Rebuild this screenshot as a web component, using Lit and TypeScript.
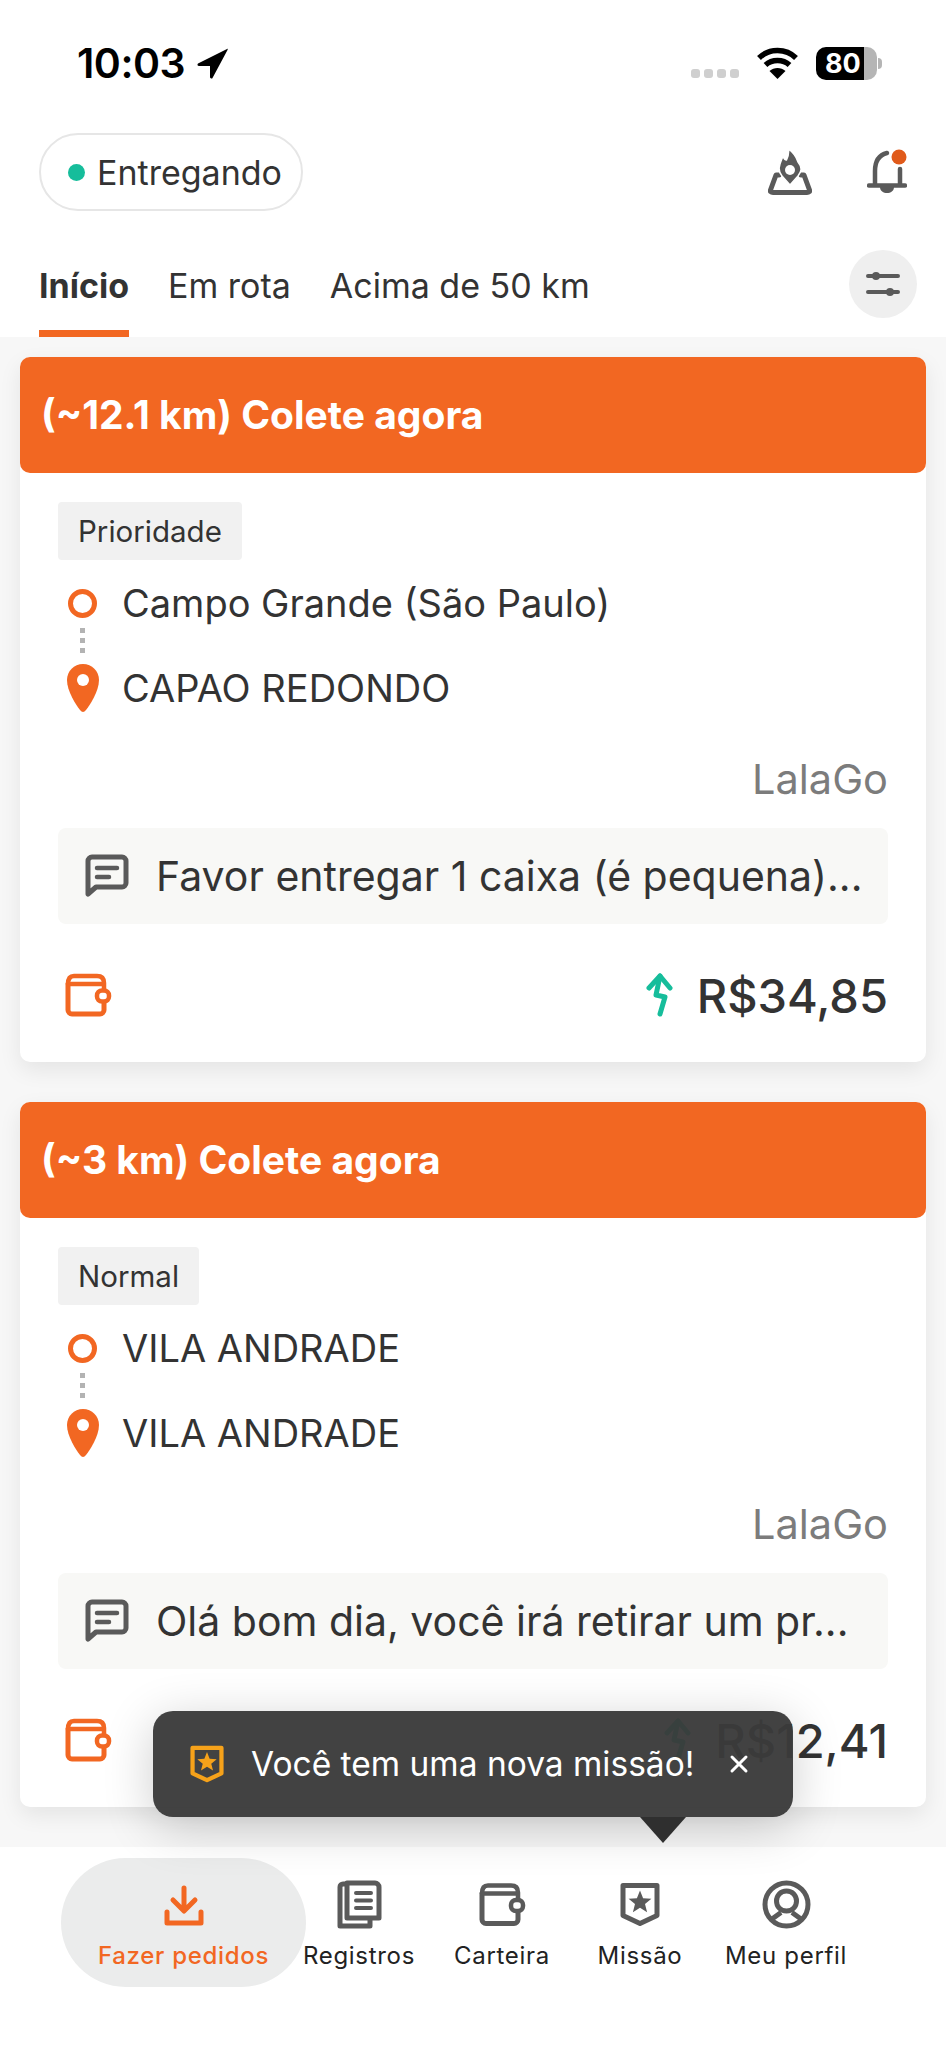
import { LitElement, html, css, svg } from "lit";
import { customElement } from "lit/decorators.js";

const GREY = "#5a5a5a";
const ORANGE = "#f26722";

// wallet is used on the cards and in the bottom bar, only the colour changes
const wallet = (color: string) => html`<svg width="47" height="44" viewBox="0 0 47 44" fill="none" stroke=${color} stroke-width="5" stroke-linejoin="round" stroke-linecap="round">
  <path d="M3 11V37a4 4 0 0 0 4 4H35a4 4 0 0 0 4-4V31" />
  <path d="M39 17V10C39 5 36 3 32 3H9C5 3 3 6 3 11H37" stroke-width="4.5" />
  <rect x="32" y="17.500" width="12" height="11" rx="5" stroke-width="4.5" />
</svg>`;

const star = (cx: number, cy: number, r: number, color: string) => {
  const pts: string[] = [];
  for (let i = 0; i < 10; i++) {
    const rad = i % 2 === 0 ? r : r * 0.44;
    const a = (Math.PI / 5) * i - Math.PI / 2;
    pts.push(`${(cx + rad * Math.cos(a)).toFixed(1)},${(cy + rad * Math.sin(a)).toFixed(1)}`);
  }
  return svg`<polygon points=${pts.join(" ")} fill=${color} stroke="none" />`;
};

const shield = (color: string, w: number, h: number) => html`<svg width=${w} height=${h} viewBox="0 0 40 44" fill="none" stroke=${color} stroke-width="5" stroke-linejoin="round">
  <path d="M3 3H37V33L20 41L3 33Z" />
  ${star(20, 20, 12, color)}
</svg>`;

const cards = [
  {
    title: "(~12.1 km) Colete agora",
    tag: "Prioridade",
    from: "Campo Grande (São Paulo)",
    to: "CAPAO REDONDO",
    note: "Favor entregar 1 caixa (é pequena)...",
    price: "R$34,85",
  },
  {
    title: "(~3 km) Colete agora",
    tag: "Normal",
    from: "VILA ANDRADE",
    to: "VILA ANDRADE",
    note: "Olá bom dia, você irá retirar um pr...",
    price: "R$12,41",
  },
];

@customElement("app-root")
export class AppRoot extends LitElement {
  static styles = css`
    :host {
      display: flex;
      flex-direction: column;
      position: relative;
      width: 946px;
      height: 2048px;
      overflow: hidden;
      background: #fff;
      font-family: Inter, "Liberation Sans", sans-serif;
      color: #333;
    }
    svg {
      display: block;
      flex: none;
    }

    .status {
      height: 126px;
      display: flex;
      align-items: center;
      padding: 0 64px 0 77px;
      color: #000;
    }
    .time {
      font-size: 41px;
      font-weight: 600;
      letter-spacing: -0.5px;
      margin-right: 12px;
    }
    .status-right {
      margin-left: auto;
      display: flex;
      align-items: center;
    }
    .signal {
      display: flex;
      gap: 4px;
      margin: 20px 18px 0 0;
    }
    .signal i {
      width: 9px;
      height: 9px;
      border-radius: 3px;
      background: #cfcfcf;
    }
    .battery {
      width: 61px;
      height: 33px;
      border-radius: 10px;
      margin-left: 18px;
      background: linear-gradient(90deg, #000 48px, #b5b5b5 48px);
      color: #fff;
      font-size: 27px;
      font-weight: 700;
      line-height: 33px;
      padding-left: 9px;
      box-sizing: border-box;
    }
    .nub {
      width: 4px;
      height: 11px;
      margin-left: 1px;
      border-radius: 0 4px 4px 0;
      background: #b5b5b5;
    }

    .top {
      height: 92px;
      display: flex;
      align-items: center;
      padding: 0 39px;
    }
    .pill {
      width: 264px;
      height: 78px;
      box-sizing: border-box;
      border: 2px solid #e6e6e6;
      border-radius: 39px;
      display: flex;
      align-items: center;
      gap: 12px;
      padding-left: 27px;
      font-size: 34px;
    }
    .pill i {
      width: 17px;
      height: 17px;
      border-radius: 50%;
      background: #16bd9b;
    }
    .top-icons {
      margin-left: auto;
      display: flex;
      align-items: center;
      gap: 55px;
    }

    .tabs {
      height: 119px;
      box-sizing: border-box;
      display: flex;
      padding: 32px 29px 0 39px;
      gap: 39px;
      font-size: 34px;
    }
    .tab {
      height: 87px;
      box-sizing: border-box;
      padding-top: 17px;
      line-height: 38px;
    }
    .tab.on {
      font-weight: 700;
      border-bottom: 7px solid #f26722;
    }
    .filter {
      width: 68px;
      height: 68px;
      margin-left: auto;
      border-radius: 50%;
      background: #efefef;
      display: flex;
      align-items: center;
      justify-content: center;
    }

    .list {
      flex: 1;
      min-height: 0;
      background: #f7f7f7;
      padding: 20px 20px 0;
      display: flex;
      flex-direction: column;
      gap: 40px;
      overflow: hidden;
    }
    .card {
      flex: none;
      background: #fff;
      border-radius: 10px;
      box-shadow: 0 8px 22px rgba(0, 0, 0, 0.08);
    }
    .card-head {
      height: 116px;
      background: #f26722;
      border-radius: 10px;
      color: #fff;
      font-size: 39px;
      font-weight: 700;
      line-height: 116px;
      padding-left: 21px;
    }
    .card-body {
      padding: 29px 38px 40px;
    }
    .tag {
      display: inline-block;
      height: 58px;
      line-height: 58px;
      padding: 0 20px;
      border-radius: 4px;
      background: #f1f1f1;
      font-size: 29.5px;
      vertical-align: top;
    }
    .route {
      display: grid;
      grid-template-columns: 49px 1fr;
      grid-template-rows: 44px 41px 44px;
      column-gap: 15px;
      margin-top: 21px;
      font-size: 38px;
      line-height: 44px;
    }
    .route > svg {
      justify-self: center;
      align-self: center;
    }
    .dots {
      justify-self: center;
      display: flex;
      flex-direction: column;
      gap: 5px;
      margin-top: 3px;
      grid-column: 1;
    }
    .dots i {
      width: 5px;
      height: 5px;
      background: #b3b3b3;
    }
    .spacer {
      grid-column: 2;
    }
    .source {
      margin-top: 46px;
      text-align: right;
      font-size: 41.5px;
      line-height: 46px;
      color: #7c7c7c;
    }
    .note {
      margin-top: 26px;
      height: 96px;
      box-sizing: border-box;
      padding: 0 20px 0 27px;
      display: flex;
      align-items: center;
      gap: 27px;
      background: #f8f8f6;
      border-radius: 8px;
      font-size: 41px;
      white-space: nowrap;
    }
    .pay {
      margin-top: 44px;
      height: 54px;
      display: flex;
      align-items: center;
      padding-left: 7px;
    }
    .price {
      margin-left: auto;
      display: flex;
      align-items: center;
      gap: 24px;
      font-size: 47px;
      font-weight: 500;
    }

    .nav {
      height: 201px;
      flex: none;
      background: #fff;
      box-sizing: border-box;
      padding: 11px 0 0 61px;
      display: grid;
      grid-template-columns: 245px 106px 180px 96px 196px;
      grid-template-rows: 129px;
      position: relative;
    }
    .nav-item {
      display: flex;
      flex-direction: column;
      align-items: center;
      padding-top: 22px;
      font-size: 24px;
      letter-spacing: 0.7px;
      line-height: 30px;
      white-space: nowrap;
      color: #222;
    }
    .nav-item svg {
      height: 49px;
      margin-bottom: 12px;
    }
    .nav-item.on {
      background: #ebecec;
      border-radius: 65px;
      color: #f26722;
      font-weight: 500;
    }

    .toast {
      position: absolute;
      left: 153px;
      top: 1711px;
      width: 640px;
      height: 106px;
      box-sizing: border-box;
      padding-left: 37px;
      display: flex;
      align-items: center;
      background: rgba(58, 58, 58, 0.96);
      border-radius: 20px;
      box-shadow: 0 10px 50px rgba(0, 0, 0, 0.2);
      color: #fff;
      font-size: 33.5px;
    }
    .toast::after {
      content: "";
      position: absolute;
      left: 487px;
      top: 106px;
      border-left: 23px solid transparent;
      border-right: 23px solid transparent;
      border-top: 26px solid #2f2f2f;
    }
    .toast-text {
      margin-left: 27px;
    }
    .toast-x {
      margin-left: 35px;
    }
  `;

  private renderCard(c: (typeof cards)[number]) {
    return html`<div class="card">
      <div class="card-head">${c.title}</div>
      <div class="card-body">
        <span class="tag">${c.tag}</span>
        <div class="route">
          <svg width="29" height="29" viewBox="0 0 29 29">
            <circle cx="14.500" cy="14.500" r="12" fill="none" stroke=${ORANGE} stroke-width="5" />
          </svg>
          <div>${c.from}</div>
          <div class="dots"><i></i><i></i><i></i></div>
          <div class="spacer"></div>
          <svg width="32" height="48" viewBox="0 0 32 48">
            <path d="M16 0C7 0 0 7 0 16C0 27 9 41 13 46C15 48.500 17 48.500 19 46C23 41 32 27 32 16C32 7 25 0 16 0Z" fill=${ORANGE} />
            <circle cx="16" cy="16" r="6" fill="#fff" />
          </svg>
          <div>${c.to}</div>
        </div>
        <div class="source">LalaGo</div>
        <div class="note">
          <svg width="44" height="44" viewBox="0 0 44 44" fill="none" stroke=${GREY} stroke-width="5" stroke-linejoin="round">
            <path d="M3 40V7a4 4 0 0 1 4-4H37a4 4 0 0 1 4 4V29a4 4 0 0 1-4 4H11Z" />
            <path d="M12 14H32M12 23H24" stroke-linecap="round" stroke-width="4.500" />
          </svg>
          <span>${c.note}</span>
        </div>
        <div class="pay">
          ${wallet(ORANGE)}
          <div class="price">
            <svg width="27" height="44" viewBox="0 0 27 44" fill="none" stroke="#16bd9b" stroke-width="5" stroke-linecap="round" stroke-linejoin="round">
              <path d="M3 15L14 3L24 15" />
              <path d="M14 3L10 22L19 24L14 41" />
            </svg>
            <span>${c.price}</span>
          </div>
        </div>
      </div>
    </div>`;
  }

  render() {
    return html`
      <div class="status">
        <span class="time">10:03</span>
        <svg width="31" height="31" viewBox="0 0 31 31"><path d="M30 1L1 15.500C0 16.500 0.500 18 2 18H13V29C13 30.500 15 31 15.500 30L30.500 2C31 1 30.500 0.500 30 1Z" fill="#000" /></svg>
        <div class="status-right">
          <div class="signal"><i></i><i></i><i></i><i></i></div>
          <svg width="41" height="32" viewBox="0 0 41 32" fill="none" stroke="#000" stroke-width="5.500">
            <path d="M2 11C12 1 29 1 39 11" />
            <path d="M8.500 18C15 12 26 12 32.500 18" />
            <path d="M20.500 32L12.500 24C17 20 24 20 28.500 24Z" fill="#000" stroke="none" />
          </svg>
          <div class="battery">80</div>
          <div class="nub"></div>
        </div>
      </div>

      <div class="top">
        <div class="pill"><i></i>Entregando</div>
        <div class="top-icons">
          <svg width="44" height="46" viewBox="0 0 44 46" fill="none">
            <path d="M11 26H8L2.500 41C2 42.500 3 43.500 5 43.500H39C41 43.500 42 42.500 41.500 41L36 26H33" stroke=${GREY} stroke-width="5" stroke-linecap="round" stroke-linejoin="round" />
            <path d="M22 36L14 27C8 20 13 13 15 7C16 10 17 11 18.500 11C20 8 21 4 20.500 0C26 4 29 10 30 13C35 19 33 23 30 27Z" fill=${GREY} stroke="#fff" stroke-width="1.500" />
            <circle cx="22" cy="21" r="5" fill="#fff" />
          </svg>
          <svg width="40" height="46" viewBox="0 0 40 46" fill="none" stroke=${GREY} stroke-width="4.500" stroke-linecap="round">
            <path d="M8 35V22C8 12 12 6 20 4" />
            <path d="M33 20V35" />
            <path d="M2 36.500H38" />
            <path d="M13 38H27C27 46 13 46 13 38Z" fill=${GREY} stroke="none" />
            <circle cx="32" cy="8" r="7.500" fill="#e05a1a" stroke="none" />
          </svg>
        </div>
      </div>

      <div class="tabs">
        <div class="tab on">Início</div>
        <div class="tab">Em rota</div>
        <div class="tab">Acima de 50 km</div>
        <div class="filter">
          <svg width="34" height="28" viewBox="0 0 34 28" fill="none" stroke=${GREY} stroke-width="4" stroke-linecap="round">
            <path d="M2 6H32M2 22H32" />
            <circle cx="10" cy="6" r="4" fill=${GREY} stroke="none" />
            <circle cx="24" cy="22" r="4" fill=${GREY} stroke="none" />
          </svg>
        </div>
      </div>

      <div class="list">${cards.map((c) => this.renderCard(c))}</div>

      <div class="nav">
        <div class="nav-item on">
          <svg width="40" height="49" viewBox="0 0 40 49" fill="none" stroke=${ORANGE} stroke-width="5" stroke-linecap="round" stroke-linejoin="round">
            <path d="M20 8V30M9 20L20 31L31 20" />
            <path d="M3 32V43H37V32" />
          </svg>
          Fazer pedidos
        </div>
        <div class="nav-item">
          <svg width="45" height="49" viewBox="0 0 45 49" fill="none" stroke=${GREY} stroke-width="5" stroke-linejoin="round">
            <path d="M10 3H38a4 4 0 0 1 4 4V38H10Z" />
            <path d="M10 4H6a3 3 0 0 0-3 3V46H33V39" />
            <path d="M19 13H34M19 20.500H34M19 28H34" stroke-width="4" stroke-linecap="round" />
          </svg>
          Registros
        </div>
        <div class="nav-item">
          ${wallet(GREY)}
          Carteira
        </div>
        <div class="nav-item">
          ${shield(GREY, 40, 49)}
          Missão
        </div>
        <div class="nav-item">
          <svg width="49" height="49" viewBox="0 0 49 49" fill="none" stroke=${GREY} stroke-width="5">
            <circle cx="24.500" cy="24.500" r="21.500" />
            <path d="M24.500 11C18.500 11 14.500 15.500 14.500 21C14.500 26 18 31 24.500 31C31 31 34.500 26 34.500 21C34.500 15.500 30.500 11 24.500 11Z" />
            <path d="M10 39L19 32.500M39 39L30 32.500" />
          </svg>
          Meu perfil
        </div>
      </div>

      <div class="toast">
        ${shield("#f6a21a", 34, 38)}
        <span class="toast-text">Você tem uma nova missão!</span>
        <svg class="toast-x" width="20" height="20" viewBox="0 0 20 20" stroke="#fff" stroke-width="3" stroke-linecap="round"><path d="M3 3L17 17M17 3L3 17" /></svg>
      </div>
    `;
  }
}
